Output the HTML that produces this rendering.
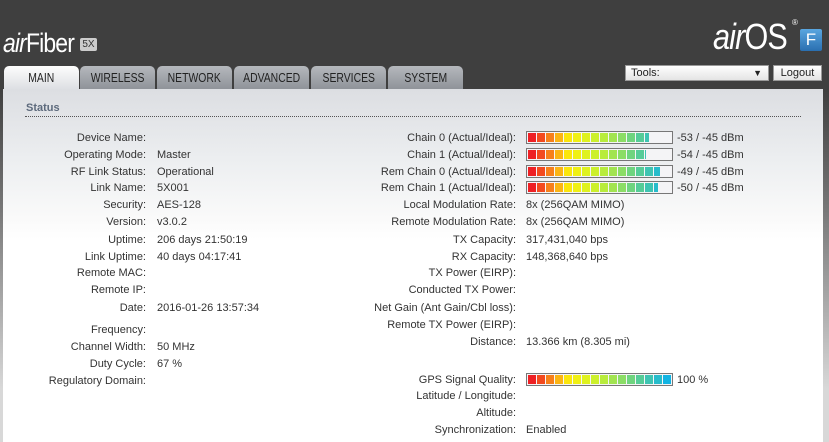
<!DOCTYPE html>
<html><head><meta charset="utf-8"><style>
*{margin:0;padding:0;box-sizing:border-box}
html,body{width:829px;height:442px;overflow:hidden}
body{position:relative;font-family:"Liberation Sans",sans-serif;font-size:11px;color:#333;background:#3f3f3f}
.side{position:absolute;top:89px;width:829px;height:353px;background:linear-gradient(#3f3f3f 0px,#777 120px,#d8d8d8 300px)}
.panel{position:absolute;left:3px;top:89px;width:820px;height:353px;background:linear-gradient(#dcdee2 0px,#eceef0 70px,#fafafa 130px,#fff 150px)}
.tab{position:absolute;top:66px;height:23px;width:75px;border-radius:5px 5px 0 0;background:linear-gradient(#b5b8bd,#8f9399);color:#222;text-align:center;line-height:23px;font-size:13px}
.tab span{display:inline-block;transform:scaleX(.8)}
.tab.on{background:linear-gradient(#fdfdfd,#dcdee2);height:24px}
.l{position:absolute;text-align:right;white-space:nowrap}
.v{position:absolute;white-space:nowrap}
.bar{position:absolute;left:526px;width:147px;height:13px;border:1px solid #777;background:#f4f4f6;padding:1px;display:flex;gap:1px}
.bar i{display:block;width:8px;height:9px}
</style></head><body>
<div class="side"></div>
<div class="panel"></div>
<div style="position:absolute;left:3px;top:28px;color:#fff;font-size:27px;font-style:italic;letter-spacing:-1px;transform:scaleX(.85);transform-origin:left">air<span style="font-style:normal">Fiber</span></div>
<div style="position:absolute;left:80px;top:38px;width:17px;height:13px;background:#ccc;color:#333;font-size:10px;line-height:13px;text-align:center;border-radius:2px">5X</div>
<div style="position:absolute;left:713px;top:16px;color:#fff;font-size:36px;font-style:italic;transform:scaleX(.85);transform-origin:left;letter-spacing:-1px">air<span style="font-style:normal">OS</span></div>
<div style="position:absolute;left:792px;top:18px;color:#fff;font-size:8px">®</div>
<div style="position:absolute;left:800px;top:29px;width:22px;height:22px;background:linear-gradient(#5aa6e0,#2a6fb0);border-radius:2px;color:#fff;font-size:17px;line-height:22px;text-align:center">F</div>
<div style="position:absolute;left:625px;top:65px;width:144px;height:16px;border:1px solid #999;background:linear-gradient(#fff,#e4e4e4);font-size:11px;line-height:14px;padding-left:5px;color:#222">Tools:<span style="position:absolute;right:6px;font-size:9px">▼</span></div>
<div style="position:absolute;left:773px;top:65px;width:49px;height:16px;border:1px solid #999;background:linear-gradient(#fff,#e4e4e4);font-size:11px;line-height:14px;text-align:center;color:#222">Logout</div>
<div class="tab on" style="left:4px"><span>MAIN</span></div>
<div class="tab" style="left:80px"><span>WIRELESS</span></div>
<div class="tab" style="left:157px"><span>NETWORK</span></div>
<div class="tab" style="left:234px"><span>ADVANCED</span></div>
<div class="tab" style="left:311px"><span>SERVICES</span></div>
<div class="tab" style="left:388px"><span>SYSTEM</span></div>
<div style="position:absolute;left:26px;top:102px;font-weight:bold;color:#5d6a7c;font-size:11px">Status</div>
<div style="position:absolute;left:25px;top:116px;width:776px;border-top:1px dotted #555"></div>

<div id="L"></div>
<script>
var L=[["Device Name:","",132],["Operating Mode:","Master",149],["RF Link Status:","Operational",166],["Link Name:","5X001",182],["Security:","AES-128",199],["Version:","v3.0.2",216],["Uptime:","206 days 21:50:19",234],["Link Uptime:","40 days 04:17:41",251],["Remote MAC:","",267],["Remote IP:","",284],["Date:","2016-01-26 13:57:34",302],["Frequency:","",324],["Channel Width:","50 MHz",341],["Duty Cycle:","67 %",358],["Regulatory Domain:","",375]];
var R=[["Chain 0 (Actual/Ideal):","-53 / -45 dBm",132,13.5],["Chain 1 (Actual/Ideal):","-54 / -45 dBm",149,13.1],["Rem Chain 0 (Actual/Ideal):","-49 / -45 dBm",166,14.8],["Rem Chain 1 (Actual/Ideal):","-50 / -45 dBm",182,14.5],["Local Modulation Rate:","8x (256QAM MIMO)",199],["Remote Modulation Rate:","8x (256QAM MIMO)",216],["TX Capacity:","317,431,040 bps",234],["RX Capacity:","148,368,640 bps",251],["TX Power (EIRP):","",267],["Conducted TX Power:","",284],["Net Gain (Ant Gain/Cbl loss):","",302],["Remote TX Power (EIRP):","",319],["Distance:","13.366 km (8.305 mi)",336],["GPS Signal Quality:","100 %",374,16],["Latitude / Longitude:","",390],["Altitude:","",407],["Synchronization:","Enabled",424]];
var C=["#ee2024","#f34a1f","#f7801a","#fbb514","#fbe60c","#f0f013","#dff21f","#ccf02c","#b8ec3c","#a2e450","#8bdd66","#6fd47f","#55cc98","#3ec4b2","#27bccb","#12b4e3"];
var h="";
L.forEach(function(r){h+='<div class="l" style="right:'+(829-146)+'px;top:'+r[2]+'px">'+r[0]+'</div><div class="v" style="left:157px;top:'+r[2]+'px">'+r[1]+'</div>';});
R.forEach(function(r){h+='<div class="l" style="right:'+(829-516)+'px;top:'+r[2]+'px">'+r[0]+'</div>';
 if(r[3]){var b='<div class="bar" style="top:'+(r[2]-1)+'px">';for(var i=0;i<16;i++){var w=Math.min(1,Math.max(0,r[3]-i));if(w>0)b+='<i style="background:'+C[i]+';width:'+(w*8)+'px"></i>';}b+='</div>';h+=b;h+='<div class="v" style="left:677px;top:'+r[2]+'px">'+r[1]+'</div>';}
 else h+='<div class="v" style="left:526px;top:'+r[2]+'px">'+r[1]+'</div>';});
document.getElementById("L").innerHTML=h;
</script>
</body></html>
